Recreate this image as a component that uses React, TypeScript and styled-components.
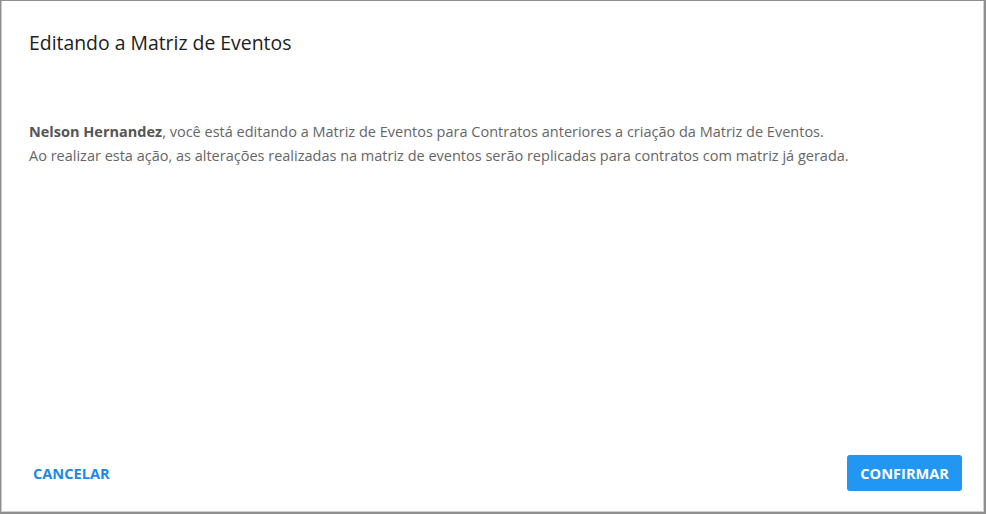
import React from "react";
import styled, { createGlobalStyle } from "styled-components";

const Global = createGlobalStyle`
  html, body { margin: 0; padding: 0; background: #ffffff; }
  body { font-family: "Open Sans", "Liberation Sans", sans-serif; }
  * { box-sizing: border-box; }
`;

const Frame = styled.div`
  width: 986px;
  height: 514px;
  background: #8f8f8f;
  padding: 1px 2px 2px 1px;
  display: flex;
`;

const Dialog = styled.div`
  flex: 1;
  background: #ffffff;
  border-left: 1px solid #c8c8c8;
  border-right: 1px solid #d0d0d0;
  border-bottom: 1px solid #d0d0d0;
  display: flex;
  flex-direction: column;
  padding: 0 21px 20px 27px;
`;

const Title = styled.h2`
  margin: 30px 0 0 0;
  font-size: 19.4px;
  font-weight: 500;
  line-height: 24px;
  color: #212121;
`;

const Body = styled.div`
  margin-top: 65px;
  font-size: 14.5px;
  line-height: 24px;
  color: #666666;
  flex: 1;
`;

const Strong = styled.strong`
  font-weight: 700;
  color: #555555;
`;

const Footer = styled.div`
  display: flex;
  justify-content: space-between;
  align-items: center;
`;

const Button = styled.button<{ $primary?: boolean }>`
  font-family: "Open Sans", "Liberation Sans", sans-serif;
  font-size: 14.6px;
  font-weight: 700;
  height: 36px;
  padding: 0 ${(p) => (p.$primary ? "13px" : "4px")};
  border: none;
  border-radius: 3px;
  cursor: pointer;
  background: ${(p) => (p.$primary ? "#2196f3" : "transparent")};
  color: ${(p) => (p.$primary ? "#ffffff" : "#1e88e5")};
`;

export default function App() {
  return (
    <>
      <Global />
      <Frame>
        <Dialog>
          <Title>Editando a Matriz de Eventos</Title>
          <Body>
            <Strong>Nelson Hernandez</Strong>, você está editando a Matriz de Eventos para Contratos anteriores a criação da Matriz de Eventos.
            <br />
            Ao realizar esta ação, as alterações realizadas na matriz de eventos serão replicadas para contratos com matriz já gerada.
          </Body>
          <Footer>
            <Button>CANCELAR</Button>
            <Button $primary>CONFIRMAR</Button>
          </Footer>
        </Dialog>
      </Frame>
    </>
  );
}
